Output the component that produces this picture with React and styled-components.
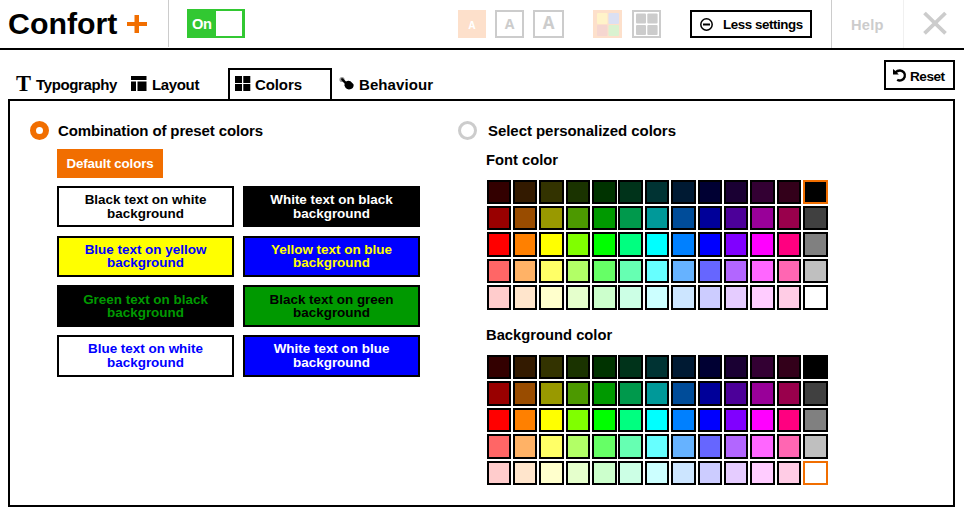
import React from "react";
import styled, { createGlobalStyle } from "styled-components";

const Global = createGlobalStyle`
  *, *::before, *::after { box-sizing: border-box; }
  body { margin: 0; background: #fff; color: #000; font-family: "Liberation Sans", Arial, sans-serif; font-weight: 700; }
  svg { display: block; flex: none; }
  button { font: inherit; color: inherit; padding: 0; margin: 0; border-radius: 0; background: none; border: 0; }
`;

const Page = styled.div`
  width: 964px;
  height: 511px;
  overflow: hidden;
`;

const Header = styled.header`
  display: flex;
  align-items: flex-start;
  height: 50px;
  border-bottom: 2px solid #000;
`;

const Brand = styled.h1`
  display: flex;
  width: 169px;
  height: 47px;
  margin: 0;
  padding-left: 8px;
  border-right: 1px solid #ccc;
  font-size: 30.3px;
  line-height: 47px;
  svg { margin: 14px 20px 0 auto; }
`;

const Toggle = styled.button`
  display: flex;
  width: 58px;
  height: 29px;
  margin: 9px 0 0 18px;
  padding: 2px 3px 2px 5px;
  background: #32c832;
  color: #fff;
  font-size: 14.67px;
  letter-spacing: -0.4px;
  line-height: 27px;
  justify-content: space-between;
`;

const Knob = styled.span`
  width: 26px;
  height: 25px;
  background: #fff;
`;

const Tools = styled.div`
  display: flex;
  align-items: flex-start;
  margin: 10px 0 0 213px;
`;

const Tool = styled.button`
  display: flex;
  justify-content: center;
  width: ${(p) => p.$w}px;
  height: 28px;
  margin-right: ${(p) => p.$gap}px;
  border: 2px solid ${(p) => (p.$active ? "#fde0cb" : "#ccc")};
  background: ${(p) => (p.$active ? "#fde0cb" : "#fff")};
  color: ${(p) => (p.$active ? "#fff" : "#ccc")};
  font-family: "Open Sans", sans-serif;
  font-size: ${(p) => p.$size || 12}px;
  line-height: ${(p) => p.$line || 24}px;
`;

const LessButton = styled.button`
  display: flex;
  width: 122px;
  height: 28px;
  padding-left: 8px;
  border: 2px solid #000;
  font-size: 13.33px;
  letter-spacing: -0.42px;
  line-height: 25px;
  white-space: nowrap;
  svg { margin: 6px 10px 0 0; }
`;

const Help = styled.a`
  width: 73px;
  height: 48px;
  margin-left: 19px;
  padding-left: 19px;
  border-left: 1px solid #ccc;
  border-right: 1px solid #f0f0f0;
  color: #ccc;
  font-size: 14.67px;
  letter-spacing: 0.2px;
  line-height: 50px;
`;

const Close = styled.button`
  margin: 11px 0 0 18px;
`;

const Nav = styled.nav`
  display: flex;
  align-items: flex-end;
  height: 49px;
  padding-left: 8px;
`;

const Tab = styled.a`
  display: flex;
  width: ${(p) => p.$w}px;
  height: 31px;
  padding-left: ${(p) => p.$pad}px;
  border: 2px solid ${(p) => (p.$active ? "#000" : "transparent")};
  border-bottom: 0;
  font-size: 15px;
  letter-spacing: ${(p) => p.$track || 0}px;
  line-height: 30px;
`;

const TabIcon = styled.span`
  display: block;
  width: ${(p) => p.$w}px;
  flex: none;
  padding-top: 6px;
`;

const SerifIcon = styled.span`
  width: 20px;
  flex: none;
  font-family: "Liberation Serif", serif;
  font-size: 22.5px;
  line-height: 28px;
`;

const Reset = styled.button`
  display: flex;
  width: 71px;
  height: 30px;
  margin: 0 9px 9px auto;
  padding-left: 7px;
  border: 2px solid #000;
  font-size: 13.6px;
  letter-spacing: -0.5px;
  line-height: 29px;
  svg { margin: 7px 3px 0 0; }
`;

const Panel = styled.main`
  display: flex;
  width: 947px;
  height: 408px;
  margin-left: 8px;
  padding: 20px 0 0 20px;
  border: 2px solid #000;
`;

const Column = styled.section`
  width: ${(p) => p.$w}px;
  flex: none;
`;

const Choice = styled.label`
  display: flex;
  height: 19px;
  font-size: 15px;
  letter-spacing: ${(p) => p.$track}px;
  line-height: 19px;
`;

const Radio = styled.span`
  width: 19px;
  height: 19px;
  margin-right: ${(p) => p.$gap}px;
  border-radius: 50%;
  border: ${(p) => (p.$on ? "6px solid #f16e00" : "3.5px solid #ccc")};
`;

const DefaultButton = styled.button`
  display: block;
  width: 106px;
  height: 29px;
  margin: 9px 0 7.8px 27px;
  background: #f16e00;
  color: #fff;
  font-size: 13.33px;
  letter-spacing: -0.12px;
  line-height: 28px;
`;

const Presets = styled.div`
  display: grid;
  grid-template-columns: 177px 177px;
  grid-auto-rows: 41.55px;
  gap: 8.2px 9px;
  margin-left: 27px;
`;

const Preset = styled.button`
  padding: 0 24px;
  border: 2px solid #000;
  background: ${(p) => p.$bg};
  color: ${(p) => p.$fg};
  font-size: 13.45px;
  line-height: 13.4px;
  text-align: center;
`;

const Title = styled.h2`
  margin: ${(p) => p.$top}px 0 0 28px;
  height: 20px;
  font-size: 14.75px;
  line-height: 20px;
`;

const Palette = styled.div`
  display: grid;
  grid-template-columns: repeat(13, 24.47px);
  grid-auto-rows: 24.36px;
  gap: 2px 1.907px;
  margin: ${(p) => p.$top}px 0 0 28.61px;
`;

const Swatch = styled.span`
  border: 2px solid ${(p) => (p.$selected ? "#f16e00" : "#000")};
  background: ${(p) => p.$color};
`;

const presets = [
  ["Black text on white background", "#000", "#fff"],
  ["White text on black background", "#fff", "#000"],
  ["Blue text on yellow background", "#00f", "#ff0"],
  ["Yellow text on blue background", "#ff0", "#00f"],
  ["Green text on black background", "#090", "#000"],
  ["Black text on green background", "#000", "#090"],
  ["Blue text on white background", "#00f", "#fff"],
  ["White text on blue background", "#fff", "#00f"],
];

const colors = [
  "#300", "#331a00", "#330", "#1a3300", "#030", "#00331a", "#033", "#001a33", "#003", "#1a0033", "#303", "#33001a", "#000",
  "#900", "#994c00", "#990", "#4c9900", "#090", "#00994c", "#099", "#004c99", "#009", "#4c0099", "#909", "#99004c", "#404040",
  "#f00", "#ff8000", "#ff0", "#80ff00", "#0f0", "#00ff80", "#0ff", "#0080ff", "#00f", "#8000ff", "#f0f", "#ff0080", "#808080",
  "#f66", "#ffb266", "#ff6", "#b2ff66", "#6f6", "#66ffb2", "#6ff", "#66b2ff", "#66f", "#b266ff", "#f6f", "#ff66b2", "#bfbfbf",
  "#fcc", "#ffe5cc", "#ffc", "#e5ffcc", "#cfc", "#ccffe5", "#cff", "#cce5ff", "#ccf", "#e5ccff", "#fcf", "#ffcce5", "#fff",
];

function ColorGrid({ top, selected }) {
  return (
    <Palette $top={top}>
      {colors.map((c, i) => (
        <Swatch key={c} $color={c} $selected={i === selected} />
      ))}
    </Palette>
  );
}

function Tiles() {
  return (
    <svg width="16" height="16">
      <path d="M0 0h7v7H0zM8.300 0h7v7h-7zM0 8h7v7H0zM8.300 8h7v7h-7z" />
    </svg>
  );
}

export default function App() {
  return (
    <Page>
      <Global />
      <Header>
        <Brand>
          Confort
          <svg width="21" height="20">
            <path d="M7.500 1h4.500v7h8v4h-8v7H7.500v-7H0V8h7.500z" fill="#f16e00" />
          </svg>
        </Brand>
        <Toggle>On<Knob /></Toggle>
        <Tools>
          <Tool $w={28} $gap={9} $active $size={10} $line={27}>A</Tool>
          <Tool $w={29} $gap={9} $size={14} $line={23}>A</Tool>
          <Tool $w={31} $gap={29} $size={17} $line={22}>A</Tool>
          <Tool $w={29} $gap={10} $active>
            <svg width="25" height="24">
              <rect x="2" y="1" width="10.5" height="11" rx="1" fill="#fff3c9" />
              <rect x="13.5" y="1" width="10.5" height="11" rx="1" fill="#dbe0f3" />
              <rect x="2" y="13" width="10.5" height="11" rx="1" fill="#f5d6d0" />
              <rect x="13.5" y="13" width="10.5" height="11" rx="1" fill="#daf2d0" />
            </svg>
          </Tool>
          <Tool $w={29} $gap={29}>
            <svg width="25" height="24">
              <rect x="2" y="1.5" width="10" height="10" rx="1" fill="#ccc" />
              <rect x="13.3" y="1.5" width="10.3" height="10" rx="1" fill="#ccc" />
              <rect x="2" y="13" width="10" height="10" rx="1" fill="#ccc" />
              <rect x="13.3" y="13" width="10.3" height="10" rx="1" fill="#ccc" />
            </svg>
          </Tool>
          <LessButton>
            <svg width="13" height="13">
              <circle cx="6.5" cy="6.5" r="5.7" fill="none" stroke="#000" strokeWidth="1.5" />
              <path d="M3 6.5h7" stroke="#000" strokeWidth="2" />
            </svg>
            Less settings
          </LessButton>
        </Tools>
        <Help>Help</Help>
        <Close>
          <svg width="26" height="24">
            <path d="M2.500 2L23.500 22.300M23.500 2L2.500 22.300" stroke="#ccc" strokeWidth="3.800" />
          </svg>
        </Close>
      </Header>
      <Nav>
        <Tab $w={121} $pad={6} $track={-0.38}>
          <SerifIcon>T</SerifIcon>
          Typography
        </Tab>
        <Tab $w={99} $pad={0} $track={-0.35}>
          <TabIcon $w={21}>
            <svg width="16" height="15">
              <path d="M0 0h15.500v4H0zM0 5.500h5V15H0zM6.500 5.500h9V15h-9z" />
            </svg>
          </TabIcon>
          Layout
        </Tab>
        <Tab $w={104} $pad={5} $track={-0.1} $active>
          <TabIcon $w={20}>
            <Tiles />
          </TabIcon>
          Colors
        </Tab>
        <Tab $w={110} $pad={5} $track={0.08}>
          <TabIcon $w={20}>
            <svg width="16" height="15">
              <circle cx="3" cy="3.500" r="2.600" fill="#999" />
              <path d="M2.500 2.300Q4 1.800 5 3.400L7 5.500Q9 4.200 11.500 5.200L14.500 8.200Q15.200 11 12.600 12.800Q9 14.500 6.700 12L5.500 9.800Q5 8.800 5.900 8L2.300 4Q1.800 3 2.500 2.300Z" />
            </svg>
          </TabIcon>
          Behaviour
        </Tab>
        <Reset>
          <svg width="14" height="14">
            <path d="M2.400 3.500Q4.200 1.500 7 1.500A5 5 0 1 1 4.200 10.700" fill="none" stroke="#000" strokeWidth="2.400" />
            <path d="M0 0L1.600 1.200L5.800 5.500H0z" />
          </svg>
          Reset
        </Reset>
      </Nav>
      <Panel>
        <Column $w={428}>
          <Choice $track={-0.12}><Radio $on $gap={9} />Combination of preset colors</Choice>
          <DefaultButton>Default colors</DefaultButton>
          <Presets>
            {presets.map(([label, fg, bg]) => (
              <Preset key={label} $fg={fg} $bg={bg}>{label}</Preset>
            ))}
          </Presets>
        </Column>
        <Column $w={400}>
          <Choice $track={-0.05}><Radio $gap={11} />Select personalized colors</Choice>
          <Title $top={10}>Font color</Title>
          <ColorGrid top={9.750} selected={12} />
          <Title $top={15.250}>Background color</Title>
          <ColorGrid top={10.300} selected={64} />
        </Column>
      </Panel>
    </Page>
  );
}
